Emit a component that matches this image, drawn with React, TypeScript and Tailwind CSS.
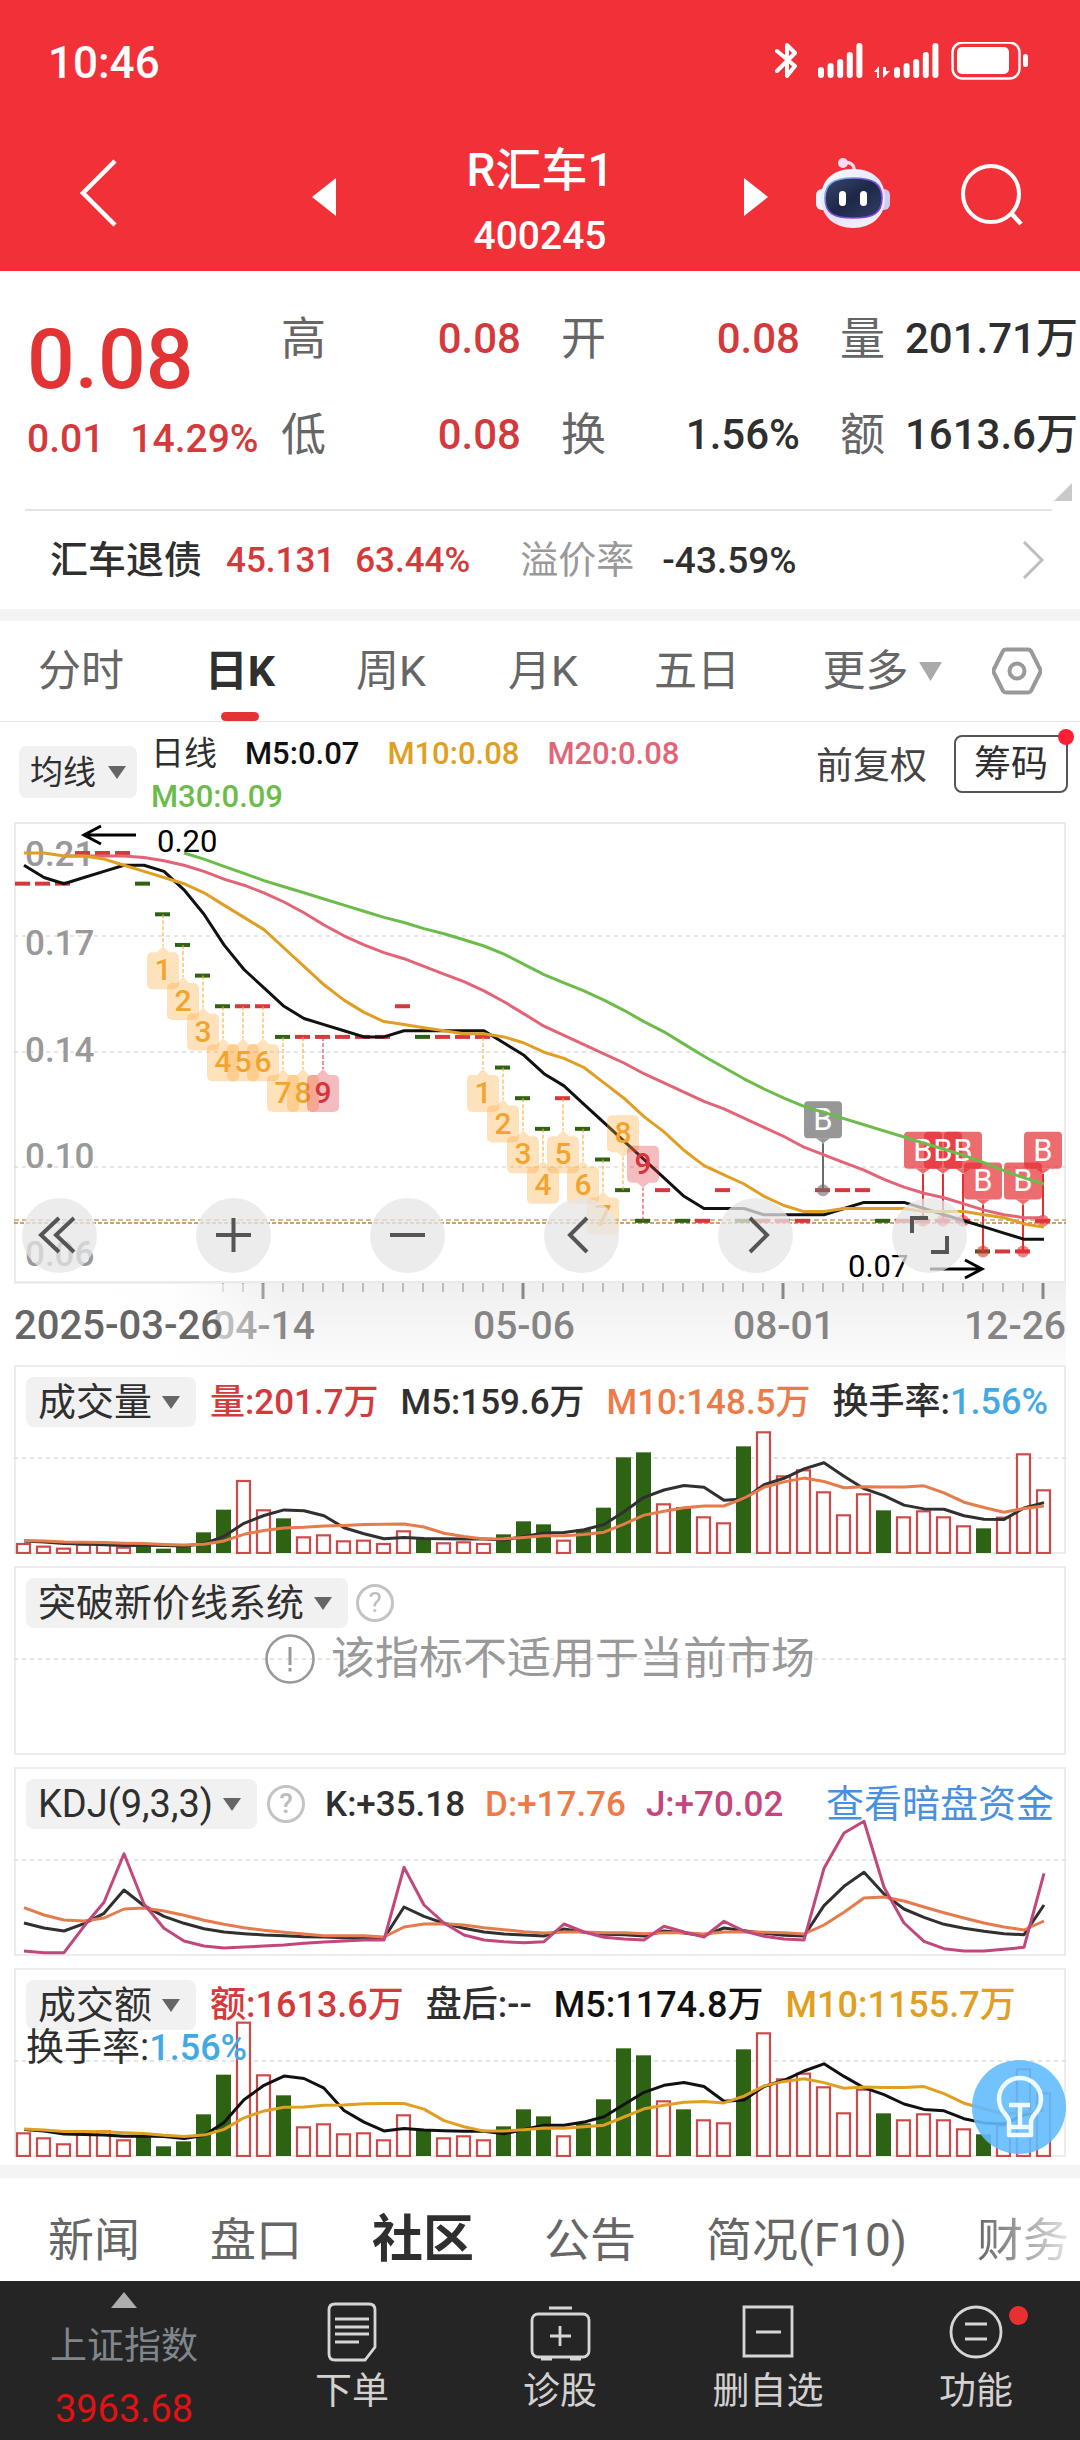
import React from "react";

const RED = "#d43a3c";
const GREEN = "#2f6314";

const px = (i: number) => 23 + i * 20;

/* ---------- price data ---------- */

const SEED = [22, 22, 22, 22, 20, 20, 20, 20, 20, 20, 20, 20, 19, 20, 20, 21, 22, 21, 20, 19, 19];
const CLOSES = [
  19, 19, 19, 20, 20, 20, 19, 18, 17, 16, 15, 15, 15, 14, 14, 14, 14, 14, 14, 15, 14, 14, 14, 14, 13, 12,
  11, 12, 11, 10, 9, 8, 9, 8, 8, 9, 8, 8, 8, 8, 9, 9, 9, 8, 8, 8, 8, 8, 7, 7, 7, 8,
];
const GREEN_CANDLES = new Set([6, 7, 8, 9, 10, 13, 20, 24, 25, 26, 28, 29, 30, 31, 33, 36, 43, 48]);
const priceY = (cents: number) => 44 + (20 - cents) * 30.65;

function average(series: number[], seed: number[], n: number, i: number) {
  const all = [...seed, ...series];
  const end = seed.length + i + 1;
  const part = all.slice(Math.max(0, end - n), end);
  return part.reduce((a, b) => a + b, 0) / part.length;
}

function pricePoints(n: number, from: number) {
  return CLOSES.map((_, i) => i)
    .filter((i) => i >= from)
    .map((i) => `${px(i) + 1},${priceY(average(CLOSES, SEED, n, i)).toFixed(1)}`)
    .join(" ");
}

type Mark = { i: number; n: number; up?: boolean };
const COUNTS: Mark[] = [
  ...[7, 8, 9, 10, 11, 12, 13, 14, 15].map((i, k) => ({ i, n: k + 1 })),
  ...[23, 24, 25, 26, 27, 28, 29].map((i, k) => ({ i, n: k + 1 })),
  { i: 30, n: 8, up: true },
  { i: 31, n: 9, up: true },
];
const BUYS = [40, 45, 46, 47, 48, 50, 51];

function CountMark({ i, n, up }: Mark) {
  const x = px(i);
  const y = priceY(CLOSES[i]);
  const top = up ? y - 75 : y + 38;
  const color = n === 9 ? "#e2343f" : "#fba733";
  const tip = up
    ? `M${x - 6} ${top + 37}L${x} ${top + 42}L${x + 6} ${top + 37}Z`
    : `M${x - 6} ${top}L${x} ${top - 6}L${x + 6} ${top}Z`;
  return (
    <g>
      <line x1={x} x2={x} y1={y} y2={up ? top + 42 : top - 6} stroke={color} strokeOpacity="0.7" strokeWidth="1.5" strokeDasharray="4 2" />
      <g fill={color} fillOpacity="0.33">
        <rect x={x - 16} y={top} width="32" height="37" rx="5" />
        <path d={tip} />
      </g>
      <text x={x} y={top + 28} textAnchor="middle" fontSize="30" fontWeight="500" fill={n === 9 ? "#d8343a" : "#f2a42e"}>
        {n}
      </text>
    </g>
  );
}

function BuyMark({ i }: { i: number }) {
  const x = px(i);
  const y = priceY(CLOSES[i]);
  const top = y - 89;
  const color = i === 40 ? "#6b6b6b" : "#e62e33";
  return (
    <g>
      <line x1={x} x2={x} y1={top + 42} y2={y} stroke={color} strokeWidth="2" />
      <circle cx={x} cy={y} r="6" fill={color} fillOpacity="0.6" />
      <g fill={color} fillOpacity="0.7">
        <rect x={x - 19} y={top} width="38" height="37" rx="4" />
        <path d={`M${x - 7} ${top + 37}L${x} ${top + 42}L${x + 7} ${top + 37}Z`} />
      </g>
    </g>
  );
}

function PriceChart() {
  const grid = [127, 243, 358];
  const labels: [string, number][] = [["0.21", 57], ["0.17", 146], ["0.14", 253], ["0.10", 359], ["0.06", 457]];
  const dates: [string, number][] = [["04-14", 12], ["05-06", 25], ["08-01", 38]];
  return (
    <svg viewBox="14 13 1052 543" className="block w-full" role="img" aria-label="日K线图">
      <defs>
        <linearGradient id="axisFade" x1="0" x2="0" y1="0" y2="1">
          <stop offset="0" stopColor="#efefef" />
          <stop offset="0.7" stopColor="#f8f8f8" />
          <stop offset="1" stopColor="#fbfbfb" />
        </linearGradient>
        <linearGradient id="leftFade" x1="0" x2="1" y1="0" y2="0">
          <stop offset="0" stopColor="#fff" />
          <stop offset="0.58" stopColor="#fff" stopOpacity="0.95" />
          <stop offset="1" stopColor="#fff" stopOpacity="0" />
        </linearGradient>
      </defs>
      <rect x="15" y="14" width="1050" height="459" fill="none" stroke="#ebebeb" strokeWidth="2" />
      {grid.map((y) => (
        <line key={y} x1="14" x2="1066" y1={y} y2={y} stroke="#dedede" strokeWidth="1.5" strokeDasharray="4 4" />
      ))}
      <line x1="14" x2="1066" y1="411" y2="411" stroke="#c9a26a" strokeWidth="1.5" strokeDasharray="5 3" />
      <line x1="14" x2="1066" y1="414" y2="414" stroke="#b98442" strokeWidth="1.5" strokeDasharray="4 2" />
      <g fontSize="35" fontWeight="500" fill="#999">
        {labels.map(([t, y]) => (
          <text key={t} x="25" y={y}>{t}</text>
        ))}
      </g>
      {CLOSES.map((c, i) => (
        <rect key={i} x={px(i) - 8} y={priceY(c) - 2} width="15" height="4" fill={GREEN_CANDLES.has(i) ? GREEN : RED} />
      ))}
      {BUYS.map((i) => <BuyMark key={i} i={i} />)}
      <g fontSize="31" fill="#fff" textAnchor="middle">
        {BUYS.map((i) => (
          <text key={i} x={px(i)} y={priceY(CLOSES[i]) - 60}>B</text>
        ))}
      </g>
      <g fill="none" strokeWidth="3" strokeLinejoin="round">
        <polyline points={pricePoints(5, 0)} stroke="#111" />
        <polyline points={pricePoints(20, 2)} stroke="#e26476" />
        <polyline points={pricePoints(10, 0)} stroke="#e09f22" />
        <polyline points={pricePoints(30, 8)} stroke="#6cbc4c" />
      </g>
      {COUNTS.map((m) => <CountMark key={m.i} {...m} />)}
      <g fill="none" stroke="#000" strokeWidth="3">
        <path d="M136 26H84M101 17L84 26L101 35" />
        <path d="M930 460H982M965 451L982 460L965 469" />
      </g>
      <g fontSize="31" fill="#000">
        <text x="157" y="43">0.20</text>
        <text x="848" y="468">0.07</text>
      </g>
      <rect x="14" y="474" width="1052" height="82" fill="url(#axisFade)" />
      {Array.from({ length: 42 }, (_, k) => k + 10).map((i) => {
        const major = (i - 12) % 13 === 0;
        return (
          <line key={i} x1={px(i)} x2={px(i)} y1="474" y2={major ? 490 : 483} stroke={major ? "#888" : "#aaa"} strokeWidth={major ? 3 : 1.5} />
        );
      })}
      <g fontSize="39" fontWeight="500" fill="#858585">
        {dates.map(([t, i]) => (
          <text key={t} x={px(i) + 1} y="530" textAnchor="middle">{t}</text>
        ))}
        <text x="1066" y="530" textAnchor="end">12-26</text>
      </g>
      <rect x="12" y="475" width="275" height="82" fill="url(#leftFade)" />
      <text x="14" y="530" fontSize="40" fontWeight="500" fill="#666">2025-03-26</text>
    </svg>
  );
}

/* ---------- bar panels ---------- */

const VOLUME = [
  30, 22, 16, 28, 28, 19, 25, 13, 21, 62, 130, 219, 131, 104, 50, 56, 38, 40, 30, 68, 43, 32, 35, 30, 56, 95,
  86, 40, 71, 136, 287, 302, 149, 138, 110, 92, 320, 365, 233, 251, 185, 116, 179, 128, 110, 128, 110, 83, 74, 109, 299, 191,
];
const AMOUNT = [
  71, 56, 38, 75, 77, 50, 61, 29, 44, 125, 244, 403, 245, 182, 89, 98, 68, 71, 50, 125, 77, 56, 62, 50, 89, 140,
  119, 62, 98, 170, 323, 302, 167, 140, 110, 101, 320, 371, 233, 250, 209, 131, 202, 128, 110, 128, 110, 83, 65, 95, 263, 191,
];

function Bars({ data, seed, colors, label }: { data: number[]; seed: number; colors: [string, string]; label: string }) {
  const y = (v: number) => 188 - v / 3;
  const seeds = Array(9).fill(seed);
  const line = (n: number) => data.map((_, i) => `${px(i) + 1},${y(average(data, seeds, n, i)).toFixed(1)}`).join(" ");
  return (
    <svg viewBox="14 0 1052 189" className="col-start-1 row-start-1 block w-full" role="img" aria-label={label}>
      <line x1="14" x2="1066" y1="93" y2="93" stroke="#dcdcdc" strokeWidth="1.5" strokeDasharray="4 4" />
      {data.map((v, i) =>
        GREEN_CANDLES.has(i) ? (
          <rect key={i} x={px(i) - 7} y={y(v)} width="15" height={188 - y(v)} fill={GREEN} />
        ) : (
          <rect key={i} x={px(i) - 6} y={y(v) + 1} width="13" height={187 - y(v)} fill="#fff" stroke="#cd4a4a" strokeWidth="2.2" />
        )
      )}
      <g fill="none" strokeWidth="3" strokeLinejoin="round">
        <polyline points={line(5)} stroke={colors[0]} />
        <polyline points={line(10)} stroke={colors[1]} />
      </g>
    </svg>
  );
}

/* ---------- KDJ ---------- */

const J = [
  576, 581, 581, 502, 430, 284, 435, 508, 546, 561, 567, 564, 561, 558, 553, 549, 546, 543, 543, 325, 438, 492, 528, 543, 548, 551,
  548, 495, 519, 535, 540, 543, 502, 519, 534, 487, 516, 532, 540, 543, 328, 222, 187, 385, 492, 547, 569, 576, 576, 571, 565, 343,
];
const K = [
  492, 507, 516, 494, 463, 393, 440, 472, 493, 509, 519, 524, 528, 530, 533, 534, 536, 537, 538, 444, 472, 493, 508, 519, 525, 528,
  531, 510, 520, 526, 527, 531, 516, 522, 530, 507, 515, 523, 529, 531, 440, 382, 340, 405, 450, 475, 496, 508, 517, 524, 527, 438,
];
const D = [
  446, 468, 483, 486, 477, 450, 447, 456, 469, 484, 496, 506, 514, 520, 525, 530, 530, 530, 534, 504, 495, 494, 498, 506, 512, 518,
  522, 519, 519, 521, 521, 524, 521, 521, 525, 519, 518, 520, 521, 525, 498, 460, 417, 414, 426, 444, 461, 477, 492, 504, 513, 486,
];

function KdjChart() {
  const line = (d: number[]) => d.map((v, i) => `${px(i) + 1},${(v / 3 - 8).toFixed(1)}`).join(" ");
  return (
    <svg viewBox="14 0 1052 189" className="col-start-1 row-start-1 block w-full" role="img" aria-label="KDJ">
      <line x1="14" x2="1066" y1="93" y2="93" stroke="#dcdcdc" strokeWidth="1.5" strokeDasharray="4 4" />
      <g fill="none" strokeWidth="3" strokeLinejoin="round">
        <polyline points={line(K)} stroke="#303030" />
        <polyline points={line(D)} stroke="#e67b4b" />
        <polyline points={line(J)} stroke="#c2477c" />
      </g>
    </svg>
  );
}

/* ---------- small parts ---------- */

function Caret({ className = "" }: { className?: string }) {
  return (
    <svg viewBox="0 0 18 13" className={`w-[18px] shrink-0 ${className}`} aria-hidden="true">
      <path d="M0 0H18L9 13Z" fill="currentColor" />
    </svg>
  );
}

function Picker({ children }: { children: React.ReactNode }) {
  return (
    <button className="flex h-[50px] shrink-0 items-center gap-2.5 rounded-lg bg-[#f1f1f1] pr-4 pl-3 text-[38px] leading-none font-normal text-[#2f2f2f]">
      {children}
      <Caret className="text-[#666]" />
    </button>
  );
}

function Help() {
  return (
    <button aria-label="说明" className="flex size-[38px] shrink-0 items-center justify-center rounded-full border-[3px] border-[#c4c4c4] text-[28px] leading-none text-[#bdbdbd]">
      ?
    </button>
  );
}

function Panel({ chart, children }: { chart: React.ReactNode; children: React.ReactNode }) {
  return (
    <section className="mx-3.5 mb-3 grid shadow-[inset_0_0_0_2px_#ececec]">
      {chart}
      <div className="relative col-start-1 row-start-1 px-3 pt-3">{children}</div>
    </section>
  );
}

function Signal({ x }: { x: number }) {
  return (
    <>
      {[11, 15, 19, 26, 35].map((h, k) => (
        <rect key={k} x={x + k * 9.6} y={36 - h} width="6" height={h} rx="3" />
      ))}
    </>
  );
}

function StatusBar() {
  return (
    <div className="flex h-[122px] items-center justify-between pr-[51px] pl-12">
      <time className="pt-1 text-[44px] leading-none font-medium">10:46</time>
      <svg viewBox="775 42 254 38" className="w-[254px]" aria-hidden="true">
        <g fill="none" stroke="#fff" strokeWidth="4" strokeLinejoin="round" strokeLinecap="round">
          <path d="M777 51L795 66L787 76V45L795 53L777 71" />
        </g>
        <g fill="#fff" transform="translate(0 42)">
          <Signal x={818} />
          <Signal x={894} />
          <path d="M879 36V24L874 30H877V36ZM883 25V36L890 29H886V25Z" />
        </g>
        <rect x="952.5" y="42.5" width="67" height="36" rx="10" fill="none" stroke="#fff" strokeWidth="2.4" />
        <rect x="957" y="47" width="52" height="27" rx="5" fill="#fff" />
        <rect x="1023" y="54" width="5" height="13" rx="2.5" fill="#fff" />
      </svg>
    </div>
  );
}

function Robot() {
  return (
    <svg viewBox="0 0 76 72" className="w-[76px]" aria-hidden="true">
      <defs>
        <linearGradient id="shell" x1="0" x2="0.6" y1="0" y2="1">
          <stop offset="0" stopColor="#fff" />
          <stop offset="0.6" stopColor="#e3e0fa" />
          <stop offset="1" stopColor="#f2effd" />
        </linearGradient>
        <linearGradient id="rim" x1="0" x2="1" y1="0" y2="1">
          <stop offset="0" stopColor="#6fe0ee" />
          <stop offset="0.4" stopColor="#7b58d8" />
          <stop offset="1" stopColor="#7b3fe4" />
        </linearGradient>
        <linearGradient id="visor" x1="0" x2="1" y1="0" y2="1">
          <stop offset="0" stopColor="#3a456c" />
          <stop offset="0.5" stopColor="#1d2848" />
          <stop offset="1" stopColor="#343f66" />
        </linearGradient>
      </defs>
      <path d="M28 6C35 4 40 8 39 14" fill="none" stroke="#f3d9ee" strokeWidth="3.4" />
      <circle cx="28" cy="6" r="5" fill="#f6dcf3" />
      <rect x="1" y="32" width="14" height="21" rx="6" fill="#f3f1fe" />
      <rect x="61" y="32" width="14" height="21" rx="6" fill="#cfc9f6" />
      <path d="M38 12C60 12 70 25 70 41C70 60 56 71 38 71C20 71 6 60 6 41C6 25 16 12 38 12Z" fill="url(#shell)" />
      <path d="M38 21C59 21 67 27 67 41C67 56 59 61 38 61C18 61 10 56 10 41C10 27 18 21 38 21Z" fill="url(#visor)" stroke="url(#rim)" strokeWidth="1.6" />
      <rect x="24" y="34" width="7" height="15" rx="3.5" fill="#fff" />
      <rect x="45" y="34" width="7" height="15" rx="3.5" fill="#fff" />
    </svg>
  );
}

function TitleBar() {
  return (
    <div className="grid h-[149px] grid-cols-[1fr_456px_1fr] items-center">
      <button aria-label="返回" className="mb-2 ml-[79px] w-10">
        <svg viewBox="0 0 40 68" className="w-10"><path d="M36 2L4 34L36 66" fill="none" stroke="#fff" strokeWidth="4.5" /></svg>
      </button>
      <div className="flex items-center justify-between">
        <button aria-label="上一只"><svg viewBox="0 0 24 38" className="w-6"><path d="M24 0V38L0 19Z" fill="#fff" /></svg></button>
        <h1 className="pt-3 text-center font-medium">
          <span className="block text-[46px] leading-[66px]">R汇车1</span>
          <span className="block text-[39px] leading-[66px]">400245</span>
        </h1>
        <button aria-label="下一只"><svg viewBox="0 0 24 38" className="w-6"><path d="M0 0V38L24 19Z" fill="#fff" /></svg></button>
      </div>
      <div className="mb-1 flex items-center justify-between pr-14 pl-[47px]">
        <button aria-label="智能助手" className="mb-1"><Robot /></button>
        <button aria-label="搜索">
          <svg viewBox="0 0 64 64" className="w-16">
            <circle cx="31" cy="31" r="28" fill="none" stroke="#fff" strokeWidth="4" />
            <path d="M51 50L61 61" stroke="#fff" strokeWidth="4.5" />
          </svg>
        </button>
      </div>
    </div>
  );
}

function Quote({ label, value, dark, last }: { label: string; value: string; dark?: boolean; last?: boolean }) {
  return (
    <div className={`flex h-24 items-center justify-between ${last ? "pr-0.5" : "pr-10"}`}>
      <dt className="text-[45px] leading-none text-[#666]">{label}</dt>
      <dd className={`text-[42px] leading-none font-medium whitespace-nowrap ${dark ? "text-[#2f2f2f]" : "text-[#d43a3c]"}`}>{value}</dd>
    </div>
  );
}

function Quotes() {
  return (
    <section className="relative grid grid-cols-[281fr_280fr_279fr_240fr] pt-5 pb-[26px]">
      <div className="pt-3.5 pl-[27px] font-medium text-[#e23434]">
        <p className="flex h-[110px] items-center text-[84px] leading-none">0.08</p>
        <p className="flex h-12 items-center gap-[26px] text-[39px] leading-none text-[#d43a3c]"><span>0.01</span><span>14.29%</span></p>
      </div>
      <dl><Quote label="高" value="0.08" /><Quote label="低" value="0.08" /></dl>
      <dl><Quote label="开" value="0.08" /><Quote label="换" value="1.56%" dark /></dl>
      <dl><Quote label="量" value="201.71万" dark last /><Quote label="额" value="1613.6万" dark last /></dl>
      <svg viewBox="0 0 18 18" className="absolute right-2 bottom-2 w-[18px]" aria-hidden="true"><path d="M18 0V18H0Z" fill="#c9c9c9" /></svg>
    </section>
  );
}

function BondRow() {
  return (
    <a href="#bond" className="flex h-[98px] items-center pr-9 pl-[50px] text-[38px] leading-none text-[#2f2f2f]">
      <span className="font-medium">汇车退债</span>
      <span className="ml-6 text-[35px] font-medium text-[#d43a3c]">45.131</span>
      <span className="ml-5 text-[35px] font-medium text-[#d43a3c]">63.44%</span>
      <span className="ml-[50px] text-[#999]">溢价率</span>
      <span className="ml-7 text-[37px] font-medium">-43.59%</span>
      <svg viewBox="0 0 22 38" className="ml-auto w-[22px]" aria-hidden="true"><path d="M2 1L20 19L2 37" fill="none" stroke="#bdbdbd" strokeWidth="3" /></svg>
    </a>
  );
}

function PeriodTabs() {
  const tabs = ["分时", "日K", "周K", "月K", "五日"];
  return (
    <nav className="grid h-[101px] grid-cols-[162fr_156fr_146fr_158fr_150fr_220fr_50fr_38fr] items-stretch border-b border-[#e6e6e6] text-[43px] leading-none text-[#666]">
      {tabs.map((t) => (
        <button key={t} className={t === "日K" ? "relative font-bold text-[#2f2f2f]" : "relative"}>
          {t}
          {t === "日K" && <span className="absolute bottom-0 left-1/2 h-[9px] w-[38px] -translate-x-1/2 rounded-full bg-[#e23434]" />}
        </button>
      ))}
      <button className="flex items-center justify-center gap-2.5">
        更多
        <svg viewBox="0 0 23 19" className="w-[23px]" aria-hidden="true"><path d="M0 0H23L11.5 19Z" fill="#aaa" /></svg>
      </button>
      <button aria-label="设置" className="flex items-center">
        <svg viewBox="0 0 50 48" className="w-[50px]">
          <path d="M14 2.5H36Q38 2.5 39 4L48 22Q49 24 48 26L39 44Q38 45.500 36 45.5H14Q12 45.5 11 44L2 26Q1 24 2 22L11 4Q12 2.5 14 2.5Z" fill="none" stroke="#999" strokeWidth="4" />
          <circle cx="25" cy="24" r="7.5" fill="none" stroke="#999" strokeWidth="4" />
        </svg>
      </button>
    </nav>
  );
}

function AverageRow() {
  return (
    <div className="flex h-[100px] items-center pr-3">
      <button className="ml-[19px] flex h-[52px] items-center gap-3 rounded-lg bg-[#f1f1f1] px-[11px] text-[33px] leading-none text-[#2f2f2f]">
        均线<Caret className="text-[#666]" />
      </button>
      <div className="ml-3.5 flex w-[600px] flex-wrap gap-x-7 pt-1.5 text-[31px] leading-[43px] font-medium">
        <span className="text-[33px] font-normal text-[#2f2f2f]">日线</span>
        <span className="text-[#111]">M5:0.07</span>
        <span className="text-[#e09f22]">M10:0.08</span>
        <span className="text-[#e26476]">M20:0.08</span>
        <span className="text-[#6cbc4c]">M30:0.09</span>
      </div>
      <button className="mb-3 ml-auto text-[37px] leading-none text-[#444]">前复权</button>
      <button className="relative mb-4 ml-[27px] h-[58px] rounded-lg border-2 border-[#555] px-[18px] text-[37px] leading-none text-[#2f2f2f]">
        筹码
        <span className="absolute -top-2 -right-2 size-4 rounded-full bg-[#fd1f33]" />
      </button>
    </div>
  );
}

function ChartButtons() {
  const items: [string, string][] = [
    ["快退", "M37 20L19 37L37 54M52 20L34 37L52 54"],
    ["放大", "M20 37H55M37.5 20V54"],
    ["缩小", "M20 37H55"],
    ["向左", "M43 20L26 37L43 54"],
    ["向右", "M32 20L49 37L32 54"],
    ["全屏", "M20 35V20H36M55 38V54H39"],
  ];
  return (
    <div className="absolute inset-x-0 top-[376px] flex gap-[99px] pl-2">
      {items.map(([label, d]) => (
        <button key={label} aria-label={label} className="size-[75px] shrink-0 rounded-full bg-[#e6e6e6]/75">
          <svg viewBox="0 0 75 75" className="w-full"><path d={d} fill="none" stroke="#555" strokeWidth="4" /></svg>
        </button>
      ))}
    </div>
  );
}

function InfoTabs() {
  const tabs = ["新闻", "盘口", "社区", "公告", "简况(F10)", "财务"];
  return (
    <nav className="flex h-[103px] items-center gap-[70px] overflow-hidden pt-5 pl-12 text-[46px] leading-none whitespace-nowrap text-[#666]">
      {tabs.map((t) => (
        <button
          key={t}
          className={
            t === "社区"
              ? "text-[51px] font-bold text-[#2f2f2f]"
              : t === "财务"
                ? "bg-linear-to-r from-[#666] to-[#e4e4e4] bg-clip-text py-2 text-transparent"
                : ""
          }
        >
          {t}
        </button>
      ))}
    </nav>
  );
}

const NAV: [string, React.ReactNode][] = [
  ["下单", <path key="p" d="M9 2H43Q49 2 49 8V45L39 58H9Q3 58 3 52V8Q3 2 9 2ZM9 17H43M9 25H43M9 32H43M9 40H33" />],
  ["诊股", (
    <g key="g">
      <rect x="-2" y="12" width="57" height="43" rx="6" />
      <path d="M15 6H38M26 24V44M16 34H37M7 57H18M36 57H47" />
    </g>
  )],
  ["删自选", <path key="p" d="M2 5H50V54H2ZM14 30H39" />],
  ["功能", (
    <g key="g">
      <circle cx="26" cy="30" r="25" />
      <path d="M15 22H37M15 37H37" />
    </g>
  )],
];

function BottomBar() {
  return (
    <footer className="grid min-h-[159px] grid-cols-[248fr_208fr_208fr_208fr_208fr] bg-[#252525] text-[#d3d0d0]">
      <a href="#index" className="flex flex-col items-center pt-[11px]">
        <svg viewBox="0 0 26 16" className="w-[26px]" aria-hidden="true"><path d="M13 0L26 16H0Z" fill="#adadad" /></svg>
        <span className="mt-2 text-[37px] leading-[62px] text-[#7f878d]">上证指数</span>
        <span className="text-[38px] leading-[62px] text-[#e01212]">3963.68</span>
      </a>
      {NAV.map(([label, icon]) => (
        <button key={label} className="relative flex flex-col items-center pt-[21px]">
          <svg viewBox="0 0 52 60" className="h-[60px] w-[52px] overflow-visible" fill="none" stroke="#d6d6d6" strokeWidth="2.8" aria-hidden="true">
            {icon}
          </svg>
          <span className="mt-1 text-[37px] leading-[52px]">{label}</span>
          {label === "功能" && <span className="absolute top-[25px] left-[137px] size-[19px] rounded-full bg-[#ea2f31]" />}
        </button>
      ))}
    </footer>
  );
}

export default function App() {
  return (
    <main className="flex w-full flex-col overflow-hidden bg-white font-[Roboto,'Noto_Sans_CJK_SC',sans-serif]">
      <header className="bg-[#f23037] text-white">
        <StatusBar />
        <TitleBar />
      </header>
      <Quotes />
      <div className="ml-[25px] mr-7 border-t-2 border-[#e4e4e4]" />
      <BondRow />
      <div className="h-3 bg-[#f4f4f4]" />
      <PeriodTabs />
      <AverageRow />
      <section className="relative mx-3.5">
        <PriceChart />
        <ChartButtons />
      </section>

      <Panel chart={<Bars data={VOLUME} seed={38} colors={["#303030", "#e67b4b"]} label="成交量图" />}>
        <div className="flex items-center text-[35px] leading-none font-medium whitespace-nowrap">
          <Picker>成交量</Picker>
          <span className="ml-3.5 text-[#d43a3c]">量:201.7万</span>
          <span className="ml-[22px] text-[#2f2f2f]">M5:159.6万</span>
          <span className="ml-[22px] text-[#ee7a48]">M10:148.5万</span>
          <span className="ml-[22px] text-[36px] text-[#2f2f2f]">换手率:<span className="text-[#42a9e2]">1.56%</span></span>
        </div>
      </Panel>

      <Panel
        chart={
          <svg viewBox="14 0 1052 189" className="col-start-1 row-start-1 block w-full" aria-hidden="true">
            <line x1="14" x2="1066" y1="93" y2="93" stroke="#dcdcdc" strokeWidth="1.5" strokeDasharray="4 4" />
          </svg>
        }
      >
        <div className="flex items-center gap-2">
          <Picker>突破新价线系统</Picker>
          <Help />
        </div>
        <p className="mt-1.5 flex items-center justify-center gap-4 text-[44px] leading-[50px] text-[#999]">
          <svg viewBox="0 0 50 50" className="w-[50px]" fill="none" stroke="#999" aria-hidden="true">
            <circle cx="25" cy="25" r="23.5" strokeWidth="2.6" />
            <path d="M25 13V31M25 34V37.5" strokeWidth="3" />
          </svg>
          该指标不适用于当前市场
        </p>
      </Panel>

      <Panel chart={<KdjChart />}>
        <div className="flex items-center text-[35px] leading-none font-medium whitespace-nowrap">
          <Picker>KDJ(9,3,3)</Picker>
          <span className="ml-2.5 flex"><Help /></span>
          <span className="ml-5 text-[#2f2f2f]">K:+35.18</span>
          <span className="ml-5 text-[#ee7a48]">D:+17.76</span>
          <span className="ml-5 text-[#c2477c]">J:+70.02</span>
          <a href="#funds" className="ml-auto text-[38px] font-normal text-[#4a90e0]">查看暗盘资金</a>
        </div>
      </Panel>

      <Panel chart={<Bars data={AMOUNT} seed={82} colors={["#111", "#e09f22"]} label="成交额图" />}>
        <div className="flex items-center text-[36px] leading-none font-medium whitespace-nowrap">
          <Picker>成交额</Picker>
          <span className="ml-3.5 text-[#d43a3c]">额:1613.6万</span>
          <span className="ml-[22px] text-[#2f2f2f]">盘后:--</span>
          <span className="ml-[22px] text-[#111]">M5:1174.8万</span>
          <span className="ml-[22px] text-[#e09f22]">M10:1155.7万</span>
        </div>
        <p className="text-[38px] leading-[34px] text-[#2f2f2f]">换手率:<span className="text-[36px] font-medium text-[#42a9e2]">1.56%</span></p>
        <button aria-label="提示" className="absolute top-[92px] right-0 size-[94px] rounded-full bg-[#62bbfd]/90">
          <svg viewBox="0 0 94 94" className="w-full" fill="none" stroke="#eefaff" strokeWidth="4.5" strokeLinejoin="round">
            <path d="M37 75V62C37 54 27 53 27 39A21 21 0 0 1 69 39C69 53 59 54 59 62V75ZM37 67H59" />
            <path d="M37 45H58M48 45V67" />
          </svg>
        </button>
      </Panel>

      <div className="-mt-1 h-[13px] bg-[#f4f4f4]" />
      <InfoTabs />
      <BottomBar />
    </main>
  );
}
